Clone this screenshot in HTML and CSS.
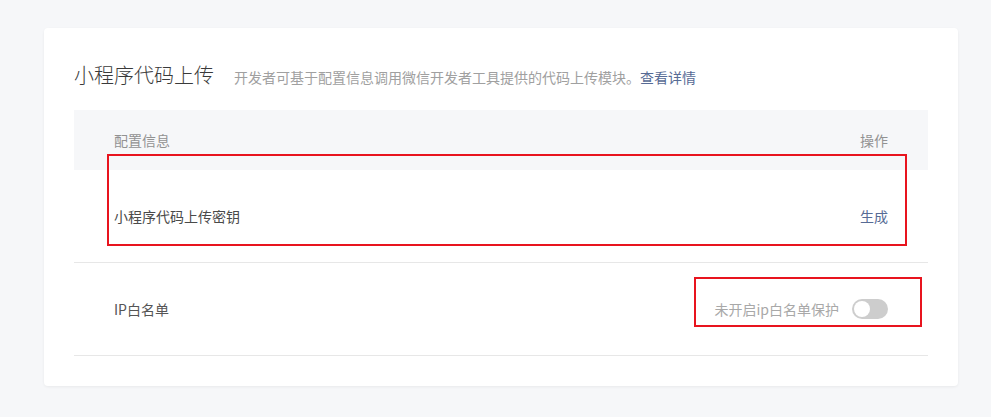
FILE: index.html
```html
<!DOCTYPE html>
<html lang="zh-CN">
<head>
<meta charset="utf-8">
<title>小程序代码上传</title>
<link rel="stylesheet" href="styles.css">
</head>
<body>
<div class="page">
  <section class="card">
    <div class="card-head">
      <h2 class="title">小程序代码上传</h2>
      <p class="desc">开发者可基于配置信息调用微信开发者工具提供的代码上传模块。<a class="link" href="#">查看详情</a></p>
    </div>
    <div class="table">
      <div class="thead">
        <span>配置信息</span>
        <span>操作</span>
      </div>
      <div class="row">
        <span class="cell-main">小程序代码上传密钥</span>
        <a class="link" href="#">生成</a>
      </div>
      <div class="row">
        <span class="cell-main ip">IP白名单</span>
        <div class="switch-wrap">
          <span class="switch-text">未开启ip白名单保护</span>
          <span class="switch"><span class="knob"></span></span>
        </div>
      </div>
    </div>
    <div class="mark mark-1"></div>
    <div class="mark mark-2"></div>
  </section>
</div>
</body>
</html>
```
FILE: styles.css
```css
* { box-sizing: border-box; }
html, body { margin: 0; padding: 0; }
body {
  background: #f6f7f9;
  font-family: "Noto Sans CJK SC", "Noto Sans", "Liberation Sans", sans-serif;
  font-size: 14px;
  color: #353535;
  width: 991px;
  height: 417px;
  overflow: hidden;
}
.page {
  padding: 28px 33px 0 44px;
}
.card {
  position: relative;
  background: #fff;
  border-radius: 4px;
  box-shadow: 0 1px 3px rgba(0, 0, 0, 0.06);
  padding: 30px 30px 30px 30px;
  width: 914px;
  height: 358px;
}
.card-head {
  display: flex;
  align-items: center;
  height: 34px;
  margin-bottom: 18px;
}
.title {
  margin: 0;
  font-size: 20px;
  font-weight: 300;
  line-height: 34px;
  color: #3a3a3a;
}
.desc {
  margin: 3px 0 0 20px;
  font-size: 14px;
  color: #a0a0a0;
  line-height: 20px;
}
.link {
  color: #576b95;
  text-decoration: none;
}
.thead {
  display: flex;
  justify-content: space-between;
  align-items: center;
  height: 60px;
  padding: 0 40px;
  background: #f6f7f9;
  color: #929292;
  line-height: 20px;
}
.row {
  display: flex;
  justify-content: space-between;
  align-items: center;
  height: 93px;
  padding: 0 40px;
  border-bottom: 1px solid #e7e7e7;
  line-height: 20px;
}
.cell-main { color: #4a4a4a; }
.cell-main.ip { color: #555; }
.switch-wrap {
  display: flex;
  align-items: center;
  gap: 13px;
}
.switch-text { color: #a8a8a8; }
.switch {
  display: flex;
  align-items: center;
  width: 36px;
  height: 20px;
  border-radius: 10px;
  background: #cdcdcd;
  padding: 2px;
}
.knob {
  width: 16px;
  height: 16px;
  border-radius: 50%;
  background: #fff;
}
.mark {
  position: absolute;
  border: 2px solid #e8141e;
}
.mark-1 {
  left: 63px;
  top: 126px;
  width: 800px;
  height: 92px;
}
.mark-2 {
  left: 650px;
  top: 249px;
  width: 228px;
  height: 50px;
}
```
